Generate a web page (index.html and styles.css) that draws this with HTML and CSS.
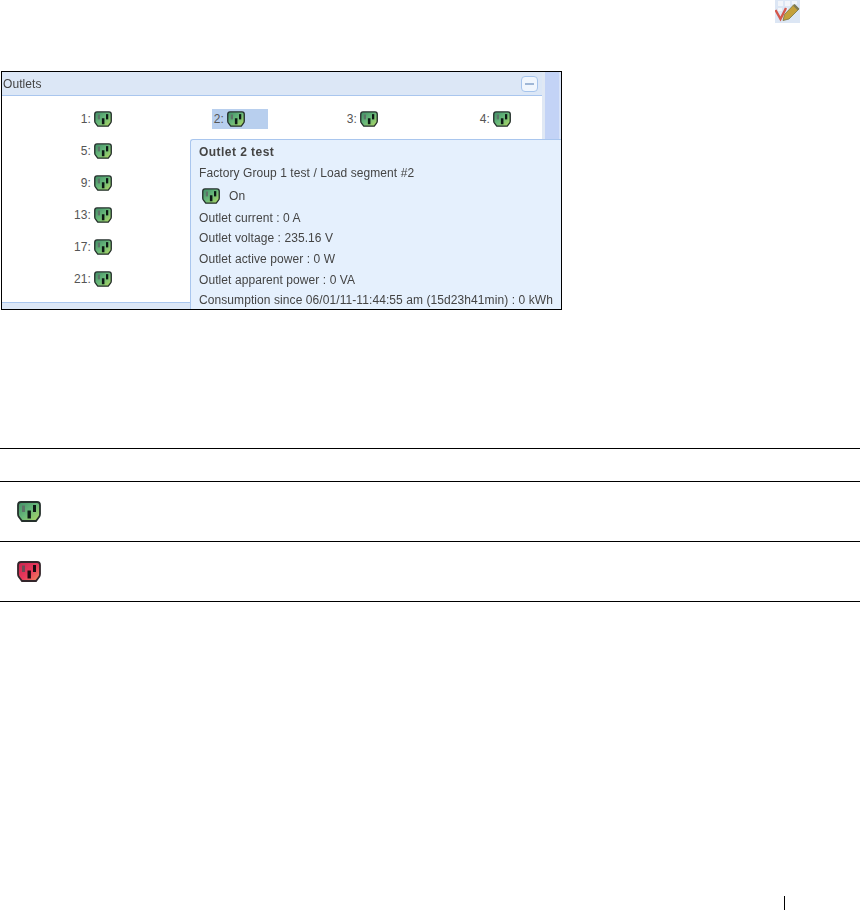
FILE: index.html
```html
<!DOCTYPE html>
<html lang="en">
<head>
<meta charset="utf-8">
<title>Outlets</title>
<link rel="stylesheet" href="styles.css">
</head>
<body>
<svg class="defs" width="0" height="0" aria-hidden="true">
  <defs>
    <linearGradient id="green" x1="0" y1="0" x2="1" y2="1">
      <stop offset="0" stop-color="#3f8d66"/>
      <stop offset="0.5" stop-color="#68b87a"/>
      <stop offset="1" stop-color="#b4da60"/>
    </linearGradient>
    <linearGradient id="red" x1="0" y1="0" x2="1" y2="1">
      <stop offset="0" stop-color="#c8224e"/>
      <stop offset="0.55" stop-color="#ea3a5c"/>
      <stop offset="1" stop-color="#f2905c"/>
    </linearGradient>
    <symbol id="outlet-green" viewBox="0 0 24 21">
      <path d="M4 1H20Q23 1 23 4V13Q23 15 22 16L19 20H5L2 16Q1 15 1 13V4Q1 1 4 1Z" fill="url(#green)" stroke="#25302c" stroke-width="1.8"/>
      <rect x="5" y="4.5" width="3" height="6.5" fill="#5d7468"/>
      <rect x="16" y="4" width="3" height="7" fill="#0d1a15"/>
      <rect x="10.5" y="9.5" width="3.4" height="8" fill="#0d1a15"/>
    </symbol>
    <symbol id="outlet-red" viewBox="0 0 24 21">
      <path d="M4 1H20Q23 1 23 4V13Q23 15 22 16L19 20H5L2 16Q1 15 1 13V4Q1 1 4 1Z" fill="url(#red)" stroke="#33262b" stroke-width="1.8"/>
      <rect x="5" y="4.5" width="3" height="6.5" fill="#6e4a55"/>
      <rect x="16" y="4" width="3" height="7" fill="#1c0a10"/>
      <rect x="10.5" y="9.5" width="3.4" height="8" fill="#1c0a10"/>
    </symbol>
  </defs>
</svg>

<div class="top">
  <svg class="edit-icon" viewBox="0 0 25 23" aria-hidden="true">
    <rect width="25" height="23" fill="#dce6f4"/>
    <path d="M3 1h5v5H3zM10 1h5v5h-5zM17 1h5v3h-5zM3 8h4v3H3zM10 8h3v2h-3z" fill="#f2f5fa"/>
    <path d="M0.5 10L5.5 19L11 8" fill="none" stroke="#d4574c" stroke-width="2.4"/>
    <path d="M8 20.5L9.5 14.5L19 4.5L24 9L14 19Z" fill="#c4a03a" stroke="#77733f" stroke-width="0.8"/>
    <path d="M19 5L23.5 9.5" stroke="#7d7a55" stroke-width="2.4"/>
  </svg>
</div>

<section class="shot">
  <div class="panel">
    <header class="panel-head">
      <span class="panel-title">Outlets</span>
      <span class="collapse"><span class="minus"></span></span>
    </header>
    <div class="grid">
      <div class="cell"><span class="tag">1:<svg class="ico"><use href="#outlet-green"/></svg></span></div>
      <div class="cell"><span class="tag sel">2:<svg class="ico"><use href="#outlet-green"/></svg></span></div>
      <div class="cell"><span class="tag">3:<svg class="ico"><use href="#outlet-green"/></svg></span></div>
      <div class="cell"><span class="tag">4:<svg class="ico"><use href="#outlet-green"/></svg></span></div>
      <div class="cell"><span class="tag">5:<svg class="ico"><use href="#outlet-green"/></svg></span></div>
      <div class="cell"></div><div class="cell"></div><div class="cell"></div>
      <div class="cell"><span class="tag">9:<svg class="ico"><use href="#outlet-green"/></svg></span></div>
      <div class="cell"></div><div class="cell"></div><div class="cell"></div>
      <div class="cell"><span class="tag">13:<svg class="ico"><use href="#outlet-green"/></svg></span></div>
      <div class="cell"></div><div class="cell"></div><div class="cell"></div>
      <div class="cell"><span class="tag">17:<svg class="ico"><use href="#outlet-green"/></svg></span></div>
      <div class="cell"></div><div class="cell"></div><div class="cell"></div>
      <div class="cell"><span class="tag">21:<svg class="ico"><use href="#outlet-green"/></svg></span></div>
      <div class="cell"></div><div class="cell"></div><div class="cell"></div>
    </div>
    <div class="band"></div>
  </div>
  <div class="scrollbar"></div>
  <aside class="tooltip">
    <div class="tip-title">Outlet 2 test</div>
    <div class="tip-line">Factory Group 1 test / Load segment #2</div>
    <div class="tip-state"><svg class="ico"><use href="#outlet-green"/></svg><span class="tip-on">On</span></div>
    <div class="tip-line">Outlet current : 0 A</div>
    <div class="tip-line">Outlet voltage : 235.16 V</div>
    <div class="tip-line">Outlet active power : 0 W</div>
    <div class="tip-line">Outlet apparent power : 0 VA</div>
    <div class="tip-line">Consumption since 06/01/11-11:44:55 am (15d23h41min) : 0 kWh</div>
  </aside>
</section>

<div class="legend">
  <div class="legend-head"></div>
  <div class="legend-row"><svg class="big"><use href="#outlet-green"/></svg></div>
  <div class="legend-row"><svg class="big"><use href="#outlet-red"/></svg></div>
</div>

<footer class="foot"><span class="foot-bar"></span></footer>
</body>
</html>
```

FILE: styles.css
```css
html, body {
  margin: 0;
  padding: 0;
  background: #fff;
  height: 910px;
  overflow: hidden;
}
body {
  font-family: "Liberation Sans", Arial, sans-serif;
  color: #444;
}
.defs {
  position: absolute;
}
.top {
  height: 71px;
  display: flex;
  justify-content: flex-end;
  align-items: flex-start;
  padding-right: 60px;
}
.edit-icon {
  width: 25px;
  height: 23px;
  filter: blur(0.5px);
}
.shot {
  position: relative;
  box-sizing: border-box;
  display: flex;
  width: 561px;
  height: 239px;
  margin-left: 1px;
  border: 1px solid #000;
  overflow: hidden;
  font-size: 12px;
  letter-spacing: 0.08px;
}
.panel {
  width: 540px;
}
.panel-head {
  height: 23px;
  display: flex;
  align-items: center;
  justify-content: space-between;
  background: #dce7f6;
  border-bottom: 1px solid #a9c6ee;
  padding-right: 4px;
}
.panel-title {
  padding-left: 1px;
  filter: blur(0.3px);
}
.collapse {
  box-sizing: border-box;
  width: 17px;
  height: 16px;
  border: 1px solid #a6c4ec;
  border-radius: 4px;
  background: #f0f6fd;
  display: flex;
  align-items: center;
  justify-content: center;
}
.minus {
  width: 9px;
  height: 2px;
  background: #9fb7d6;
}
.grid {
  display: grid;
  grid-template-columns: repeat(4, 133px);
  grid-auto-rows: 32px;
  padding: 7px 0;
}
.cell {
  display: flex;
  justify-content: flex-end;
  align-items: center;
}
.tag {
  display: flex;
  align-items: center;
  gap: 3px;
  height: 20px;
  padding: 0 23px 0 2px;
  color: #555;
}
.sel {
  background: #b8cfee;
}
.ico {
  width: 18px;
  height: 16px;
  filter: blur(0.35px);
}
.scrollbar {
  box-sizing: border-box;
  width: 19px;
  background: #c3d3f6;
  border-left: 3px solid #e0e8f4;
  border-right: 2px solid #d8e3f8;
}
.band {
  height: 8px;
  background: #dce7f6;
  border-top: 1px solid #a9c6ee;
}
.tooltip {
  position: absolute;
  left: 188px;
  top: 67px;
  right: 0;
  height: 200px;
  box-sizing: border-box;
  padding: 2px 0 0 8px;
  background: #e5f0fd;
  border: 1px solid #a9c6ee;
  border-right: 0;
  border-top-left-radius: 3px;
  white-space: nowrap;
}
.tip-title {
  font-weight: bold;
  height: 21px;
  line-height: 21px;
  letter-spacing: 0.45px;
  filter: blur(0.25px);
}
.tip-line {
  height: 20.7px;
  line-height: 20.7px;
  filter: blur(0.3px);
}
.tip-state {
  display: flex;
  align-items: center;
  gap: 9px;
  height: 24px;
  padding-left: 3px;
}
.tip-on {
  color: #444;
  filter: blur(0.3px);
}
.legend {
  margin-top: 138px;
  border-top: 1px solid #000;
}
.legend-head {
  height: 32px;
  border-bottom: 1px solid #000;
}
.legend-row {
  height: 59px;
  display: flex;
  align-items: center;
  padding-left: 17px;
  border-bottom: 1px solid #000;
}
.big {
  width: 24px;
  height: 21px;
  filter: blur(0.35px);
}
.foot {
  margin-top: 294px;
  padding-left: 784px;
}
.foot-bar {
  display: block;
  width: 1px;
  height: 14px;
  background: #000;
}
```
